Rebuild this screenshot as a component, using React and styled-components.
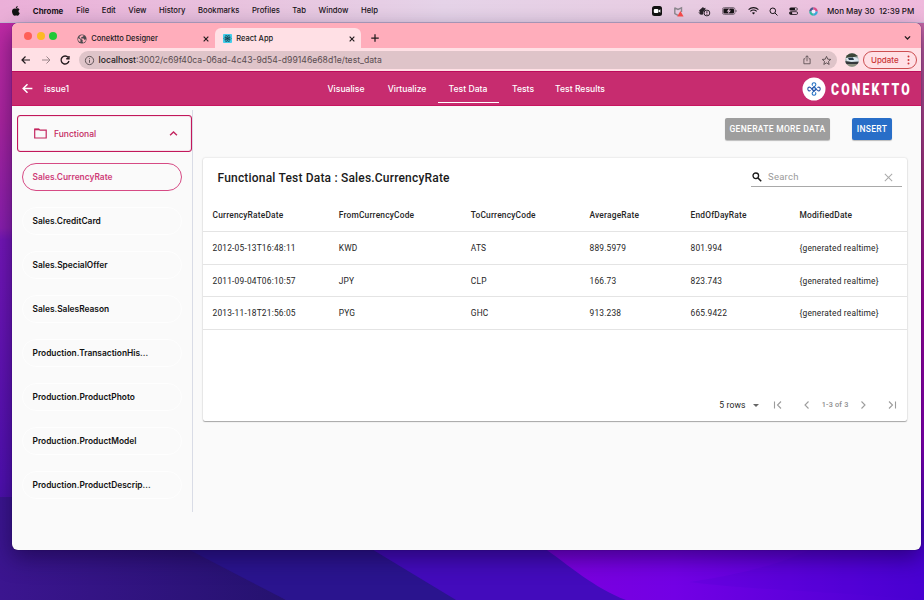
import React from "react";
import { useState } from "react";
import styled, { createGlobalStyle } from "styled-components";

const menus = ["File", "Edit", "View", "History", "Bookmarks", "Profiles", "Tab", "Window", "Help"];

const links = [
	{ name: "Visualise", width: 61 },
	{ name: "Virtualize", width: 61 },
	{ name: "Test Data", width: 61 },
	{ name: "Tests", width: 49 },
	{ name: "Test Results", width: 65 },
];

const tables = [
	"Sales.CurrencyRate",
	"Sales.CreditCard",
	"Sales.SpecialOffer",
	"Sales.SalesReason",
	"Production.TransactionHis...",
	"Production.ProductPhoto",
	"Production.ProductModel",
	"Production.ProductDescrip...",
];

const columns = ["CurrencyRateDate", "FromCurrencyCode", "ToCurrencyCode", "AverageRate", "EndOfDayRate", "ModifiedDate"];

const rows = [
	["2012-05-13T16:48:11", "KWD", "ATS", "889.5979", "801.994", "{generated realtime}"],
	["2011-09-04T06:10:57", "JPY", "CLP", "166.73", "823.743", "{generated realtime}"],
	["2013-11-18T21:56:05", "PYG", "GHC", "913.238", "665.9422", "{generated realtime}"],
];

// simple stroked icon, every path is drawn in a 24 unit box
const Icon = ({ size = 12, width = 2, children }) => (
	<svg width={size} height={size} viewBox="0 0 24 24" fill="none" stroke="currentColor" strokeWidth={width}>
		{children}
	</svg>
);

const Wallpaper = () => (
	<Backdrop viewBox="0 0 924 600" preserveAspectRatio="none">
		<defs>
			<linearGradient id="base" x1="0" y1="0" x2="0" y2="1">
				<stop offset="0" stopColor="#c42ba6" />
				<stop offset=".2" stopColor="#ac259f" />
				<stop offset=".38" stopColor="#8a1fae" />
				<stop offset=".4" stopColor="#7416b7" />
				<stop offset=".8" stopColor="#5010b0" />
				<stop offset="1" stopColor="#35138b" />
			</linearGradient>
			<linearGradient id="right" x1="0" y1="0" x2="0" y2="1">
				<stop offset="0" stopColor="#c46ba8" />
				<stop offset=".3" stopColor="#a8337c" />
				<stop offset=".5" stopColor="#a0069a" />
				<stop offset=".74" stopColor="#8a00ba" />
				<stop offset=".88" stopColor="#4705c4" />
				<stop offset="1" stopColor="#4a00d0" />
			</linearGradient>
			<linearGradient id="floor" x1="0" y1="0" x2="1" y2="0">
				<stop offset="0" stopColor="#3b158f" />
				<stop offset="1" stopColor="#25126f" />
			</linearGradient>
			<linearGradient id="violet" x1="0" y1="0" x2="1" y2="0">
				<stop offset="0" stopColor="#7c00dc" />
				<stop offset=".35" stopColor="#7300e5" />
				<stop offset="1" stopColor="#4800d2" />
			</linearGradient>
		</defs>
		<rect width="924" height="600" fill="url(#base)" />
		<rect x="460" width="464" height="600" fill="url(#right)" />
		<path d="M0 497H120L286 600H0Z" fill="url(#floor)" />
		<path d="M180 545L286 600H460L370 545Z" fill="#2a148e" />
		<path d="M365 545L456 600H626L540 545Z" fill="#430bbc" />
		<path d="M540 545C570 566 594 588 626 600H924V545Z" fill="url(#violet)" />
		<path d="M820 545C780 566 735 575 690 582C750 590 850 592 924 600V545Z" fill="#4c00d4" opacity=".2" />
	</Backdrop>
);

const StatusIcons = () => (
	<>
		<svg width="10" height="10" viewBox="0 0 10 10">
			<rect width="10" height="10" rx="2.5" fill="#111" />
			<rect x="1.8" y="3" width="4.6" height="4" rx="1" fill="#fff" />
			<path d="M6.7 4.5L8.4 3.3V6.7L6.7 5.5Z" fill="#fff" />
		</svg>
		<svg width="11" height="11" viewBox="0 0 11 11">
			<path d="M1.8 1.5V7.5L5 9.3M1.8 1.8L5 3.4L8.5 1.8V6" fill="none" stroke="#8a858c" strokeWidth="1.4" />
			<path d="M7.4 5L10.6 10.5H4.2Z" fill="#f24848" />
		</svg>
		<svg width="13" height="11" viewBox="0 0 13 11">
			<path d="M1 4.5L5 1L6 2.2L7.5 1.8L7.3 4L5.2 6V8.5L3 8.8L1 7.8L2.3 6.7L0 6.2L2 5.4Z" fill="#29232a" />
			<circle cx="8.9" cy="7" r="2.9" fill="#eac7e0" stroke="#29232a" />
			<path d="M8.9 5.2V7.4M8.9 8V8.8" stroke="#29232a" />
		</svg>
		<svg width="15" height="8" viewBox="0 0 15 8">
			<rect x=".4" y=".5" width="12.6" height="7" rx="2" fill="#eac7e0" stroke="#6a5c69" strokeWidth=".8" />
			<rect x="1.4" y="1.5" width="10.6" height="5" rx="1" fill="#161216" />
			<path d="M7.8 1L4.6 4.4H6.6L5.8 7L9 3.6H7.1Z" fill="#eac7e0" />
			<path d="M14 3V5" stroke="#6a5c69" />
		</svg>
		<svg width="11" height="8" viewBox="0 0 11 8" fill="none" stroke="#161216" strokeWidth="1.1">
			<path d="M.6 2.6C3.4 0 7.6 0 10.4 2.6M2.3 4.4C4.2 2.8 6.8 2.8 8.7 4.4" />
			<path d="M3.9 5.8C4.9 5 6.1 5 7.1 5.8L5.5 7.5Z" fill="#161216" stroke="none" />
		</svg>
		<svg width="9" height="9" viewBox="0 0 9 9" fill="none" stroke="#161216">
			<circle cx="3.8" cy="3.8" r="2.8" />
			<path d="M6 6L8.5 8.5" />
		</svg>
		<svg width="9" height="8" viewBox="0 0 9 8">
			<rect x=".4" y=".4" width="8.2" height="3" rx="1.5" fill="#161216" />
			<circle cx="6.9" cy="1.9" r="1" fill="#e7cbe1" />
			<rect x=".4" y="4.7" width="8.2" height="2.8" rx="1.4" fill="none" stroke="#161216" strokeWidth=".8" />
			<circle cx="2.1" cy="6.1" r="1.2" fill="#161216" />
		</svg>
		<svg width="9" height="9" viewBox="0 0 9 9" fill="none" strokeWidth="2.2">
			<circle cx="4.5" cy="4.5" r="2" fill="#f2ecff" />
			<path d="M1.3 4.5A3.2 3.2 0 0 1 4.5 1.3" stroke="#4a5c91" />
			<path d="M4.5 1.3A3.2 3.2 0 0 1 7.7 4.5" stroke="#db4c88" />
			<path d="M7.7 4.5A3.2 3.2 0 0 1 4.5 7.7" stroke="#37a9db" />
			<path d="M4.5 7.7A3.2 3.2 0 0 1 1.3 4.5" stroke="#29bda4" />
		</svg>
	</>
);

const ReactMark = () => (
	<svg width="9" height="9" viewBox="0 0 10 10" fill="none" stroke="#173a47" strokeWidth=".6">
		<rect width="10" height="10" rx="1" fill="#43cdea" stroke="none" />
		<ellipse cx="5" cy="5" rx="4" ry="1.6" />
		<ellipse cx="5" cy="5" rx="4" ry="1.6" transform="rotate(60 5 5)" />
		<ellipse cx="5" cy="5" rx="4" ry="1.6" transform="rotate(120 5 5)" />
		<circle cx="5" cy="5" r=".9" fill="#173a47" />
	</svg>
);

const Avatar = () => (
	<svg width="14" height="14" viewBox="0 0 14 14">
		<clipPath id="face"><circle cx="7" cy="7" r="6.8" /></clipPath>
		<g clipPath="url(#face)">
			<rect width="14" height="14" fill="#a5b3b2" />
			<path d="M0 0H14V3L9 4L0 5Z" fill="#3d4638" />
			<path d="M1 5L9 4L14 6V9L7 9L2 8Z" fill="#dce6ee" />
			<path d="M3 5L8 4.6L9 7L4 7Z" fill="#26394b" />
			<path d="M0 8L6 9L14 8.5V11L0 11Z" fill="#34373a" />
			<path d="M0 11H14V14H0Z" fill="#8e9081" />
		</g>
	</svg>
);

const Logo = () => (
	<svg width="24" height="24" viewBox="0 0 24 24">
		<circle cx="12" cy="12" r="11.5" fill="#fff" />
		<g fill="none" stroke="#2474c6" strokeWidth="1.1">
			<path d="M12 14.2L9.8 12L13.4 8.6C14.4 7.2 13.6 5.8 12 5.8S9.6 7.2 10.6 8.6" />
			<path d="M9.8 12L12 9.8L15.4 13.4C16.8 14.4 18.2 13.6 18.2 12S16.8 9.6 15.4 10.6" stroke="#2956a7" />
			<path d="M12 9.8L14.2 12L10.6 15.4C9.6 16.8 10.4 18.2 12 18.2S14.4 16.8 13.4 15.4" />
			<path d="M14.2 12L12 14.2L8.6 10.6C7.2 9.6 5.8 10.4 5.8 12S7.2 14.4 8.6 13.4" stroke="#2956a7" />
		</g>
	</svg>
);

const App = () => {
	const [active, setActive] = useState("Sales.CurrencyRate");

	return (
		<Desktop>
			<GlobalStyle />
			<Wallpaper />
			<MenuBar>
				<svg width="8" height="10" viewBox="0 0 8 10" fill="#111">
					<path d="M4 2.8C5.3 2 6.8 2.3 7.5 3.4C6 4.4 6.2 6.4 7.8 7.1C7.2 8.8 6.3 9.8 5.5 9.7C4.7 9.4 3.9 9.3 3 9.7C1.7 10 0 7.6 0 5.4C0 3 2 1.8 4 2.8Z" />
					<path d="M3.8 2.2C3.8 1 4.6.1 5.7 0C5.8 1.2 4.9 2.2 3.8 2.2Z" />
				</svg>
				<MenuName>Chrome</MenuName>
				{menus.map((item) => (<MenuItem key={item}>{item}</MenuItem>))}
				<Status>
					<StatusIcons />
				</Status>
				<Clock>Mon May 30&nbsp; 12:39 PM</Clock>
			</MenuBar>

			<Window>
				<TabStrip>
					<Lights>
						<Light $color="#ff5f57" />
						<Light $color="#fdb924" />
						<Light $color="#20c838" />
					</Lights>
					<Tab>
						<svg width="10" height="10" viewBox="0 0 10 10">
							<circle cx="5" cy="5" r="4.6" fill="#4d4a4e" />
							<path d="M1 4.2C2 4.4 3 5 3.5 5.7L3.3 8.2C1.8 7.4.8 6 1 4.2ZM4 1.2L6.5 1.2L6.2 2.6L4.3 3.3L4 4.5H6.6L7.6 6L9 5.3C9 7 7.8 8.4 6.2 8.8L5.5 7.4L5.7 6L3.3 4.5L2.2 3Z" fill="#ffadbb" />
						</svg>
						<TabName>Conektto Designer</TabName>
						<Icon size={8} width={3.4}><path d="M5 5L19 19M19 5L5 19" /></Icon>
					</Tab>
					<Tab $active>
						<ReactMark />
						<TabName>React App</TabName>
						<Icon size={8} width={3.4}><path d="M5 5L19 19M19 5L5 19" /></Icon>
					</Tab>
					<NewTab>
						<Icon size={10} width={3}><path d="M12 3V21M3 12H21" /></Icon>
					</NewTab>
					<ChevronBox>
						<Icon size={9} width={3.4}><path d="M5 9L12 16L19 9" /></Icon>
					</ChevronBox>
				</TabStrip>

				<Toolbar>
					<Icon width={2.4}><path d="M20 12H4M11 5L4 12L11 19" /></Icon>
					<Faded><Icon width={2}><path d="M4 12H20M13 5L20 12L13 19" /></Icon></Faded>
					<Icon width={2.6}><path d="M18.5 7A8 8 0 1 0 20 14M20 4V9.5H14.5" /></Icon>
					<AddressBar>
						<Icon size={11} width={2}><circle cx="12" cy="12" r="9" /><path d="M12 11V17M12 7V9" /></Icon>
						<Address><b>localhost</b>:3002/c69f40ca-06ad-4c43-9d54-d99146e68d1e/test_data</Address>
						<Icon size={10} width={2}><path d="M8 9H4.5V21H19.5V9H16M12 15V2M8 5.5L12 2L16 5.5" /></Icon>
						<Icon size={11} width={2}><path d="M12 3L14.7 9.1L21.3 9.7L16.3 14.1L17.8 20.6L12 17.2L6.2 20.6L7.7 14.1L2.7 9.7L9.3 9.1Z" /></Icon>
					</AddressBar>
					<Avatar />
					<Update>
						Update
						<svg width="3" height="10" viewBox="0 0 3 10" fill="currentColor">
							<circle cx="1.5" cy="1.5" r="1" />
							<circle cx="1.5" cy="5" r="1" />
							<circle cx="1.5" cy="8.5" r="1" />
						</svg>
					</Update>
				</Toolbar>

				<AppBar>
					<Icon size={13} width={2.7}><path d="M21 12H4M12 4L4 12L12 20" /></Icon>
					<Project>issue1</Project>
					<Links>
						{links.map((item) => (
							<AppLink key={item.name} $width={item.width} $active={item.name === "Test Data"}>{item.name}</AppLink>
						))}
					</Links>
					<Logo />
					<Brand>CONEKTTO</Brand>
				</AppBar>

				<Content>
					<Sidebar>
						<Group>
							<svg width="13" height="11" viewBox="0 0 13 11" fill="none" stroke="currentColor" strokeWidth="1.2">
								<path d="M.7 1H4.8L6 2.2H12.2V10H.7Z" />
								<path d="M.7 1.5H5" strokeWidth="1.6" />
							</svg>
							<GroupName>Functional</GroupName>
							<Icon size={11} width={3}><path d="M4.5 16L12 8.5L19.5 16" /></Icon>
						</Group>
						<TableList>
							{tables.map((item) => (
								<TableItem key={item} $active={item === active} onClick={() => setActive(item)}>{item}</TableItem>
							))}
						</TableList>
					</Sidebar>

					<Main>
						<Actions>
							<Button $color="#9e9e9e" $width={105}>GENERATE MORE DATA</Button>
							<Button $color="#286ec8" $width={40}>INSERT</Button>
						</Actions>
						<Card>
							<CardHeader>
								<Title>Functional Test Data : Sales.CurrencyRate</Title>
								<Search>
									<svg width="10" height="10" viewBox="0 0 10 10" fill="none" stroke="#1c1c1c">
										<circle cx="3.8" cy="3.8" r="2.8" strokeWidth="1.3" />
										<path d="M6 6L9.2 9.2" strokeWidth="1.6" />
									</svg>
									<Placeholder>Search</Placeholder>
									<Icon size={11} width={2.2}><path d="M4 4L20 20M20 4L4 20" /></Icon>
								</Search>
							</CardHeader>
							<HeadRow>
								{columns.map((item) => (<span key={item}>{item}</span>))}
							</HeadRow>
							{rows.map((row) => (
								<Row key={row[0]}>
									{row.map((cell, index) => (<span key={index}>{cell}</span>))}
								</Row>
							))}
							<Pager>
								<PageSize>5 rows</PageSize>
								<Caret />
								<PageIcon $space={13.5}><Icon width={2.2}><path d="M5 5V19M18 5L11 12L18 19" /></Icon></PageIcon>
								<PageIcon $space={17}><Icon width={2.2}><path d="M15 5L8 12L15 19" /></Icon></PageIcon>
								<Range>1-3 of 3</Range>
								<PageIcon $space={8}><Icon width={2.2}><path d="M9 5L16 12L9 19" /></Icon></PageIcon>
								<PageIcon $space={17.5}><Icon width={2.2}><path d="M6 5L13 12L6 19M19 5V19" /></Icon></PageIcon>
							</Pager>
						</Card>
					</Main>
				</Content>
			</Window>
		</Desktop>
	);
};

export default App;

const GlobalStyle = createGlobalStyle`
	* {
		box-sizing: border-box;
	}
	body {
		margin: 0;
		overflow: hidden;
		font-family: Inter, "Liberation Sans", sans-serif;
	}
	svg {
		flex: none;
		display: block;
	}
`;

const Desktop = styled.div`
	position: relative;
	width: 924px;
	height: 600px;
	overflow: hidden;
`;

const Backdrop = styled.svg`
	position: absolute;
	inset: 0;
	width: 100%;
	height: 100%;
	z-index: -1;
`;

const MenuBar = styled.header`
	display: flex;
	align-items: center;
	height: 23px;
	padding: 0 10px 0 12px;
	font-size: 7.7px;
	line-height: 12px;
	color: #171217;
	white-space: nowrap;
	border-bottom: 1px solid #c9b8d5;
	background: linear-gradient(90deg, #ebafd8 0, #e8c4df 28%, #e5d3e8 48%, #e8cce2 75%, #efb9dc 100%);
`;

const MenuName = styled.b`
	width: 31px;
	margin: 0 12.5px 0 12.8px;
	font-size: 7.9px;
	font-weight: 700;
`;

const MenuItem = styled.span`
	margin-right: 12.55px;
	font-weight: 500;
`;

const Status = styled.div`
	display: flex;
	align-items: center;
	gap: 10.8px;
	margin-left: auto;
	svg:nth-child(3) {
		margin-left: 3px;
	}
`;

const Clock = styled.span`
	width: 87px;
	margin-left: 9px;
	font-size: 8px;
	font-weight: 500;
`;

const Window = styled.div`
	display: flex;
	flex-direction: column;
	width: 909px;
	height: 527px;
	margin-left: 12px;
	overflow: hidden;
	border-radius: 6px;
	background: #fafafa;
	box-shadow: 0 8px 22px rgba(15, 0, 50, 0.5), 0 0 1px rgba(30, 0, 60, 0.9);
`;

const TabStrip = styled.div`
	display: flex;
	align-items: center;
	height: 25px;
	padding: 0 9px 0 12.4px;
	color: #211b1d;
	background: #ffadbb;
`;

const Lights = styled.div`
	display: flex;
	gap: 4.3px;
	width: 43.3px;
	margin-top: 1px;
`;

const Light = styled.span`
	width: 8px;
	height: 8px;
	border-radius: 50%;
	background: ${(props) => props.$color};
`;

const Tab = styled.div`
	display: flex;
	align-items: center;
	align-self: flex-end;
	width: ${(props) => (props.$active ? "146px" : "147px")};
	height: 20px;
	padding: 1px ${(props) => (props.$active ? "5px 0 8px" : "5px 0 9px")};
	border-radius: 6px 6px 0 0;
	background: ${(props) => (props.$active ? "#ffe0e5" : "none")};
`;

const TabName = styled.span`
	flex: 1;
	margin-left: 4.5px;
	font-size: 7.5px;
	font-weight: 500;
	line-height: 12px;
`;

const NewTab = styled.div`
	flex: 1;
	margin: 4px 0 0 9px;
`;

const ChevronBox = styled.div`
	margin-top: 4px;
`;

const Toolbar = styled.div`
	display: flex;
	align-items: center;
	gap: 7.5px;
	height: 23px;
	padding: 1px 4px 0 8px;
	color: #231b1e;
	background: #ffe0e5;
`;

const Faded = styled.span`
	opacity: 0.45;
`;

const AddressBar = styled.div`
	display: flex;
	flex: 1;
	align-items: center;
	gap: 9px;
	height: 18px;
	padding: 0 5px 0 5px;
	border-radius: 9px;
	color: #574a4e;
	background: #dfc4c9;
`;

const Address = styled.span`
	flex: 1;
	margin-left: -5px;
	font-size: 8.65px;
	line-height: 13px;
	color: #5a4c50;
	b {
		font-weight: 500;
		color: #241c1f;
	}
`;

const Update = styled.div`
	display: flex;
	align-items: center;
	justify-content: space-between;
	width: 54px;
	height: 18px;
	margin-left: -3px;
	padding: 0 6px 0 7px;
	border: 1px solid #cc4e51;
	border-radius: 9px;
	font-size: 8px;
	font-weight: 500;
	color: #cb3536;
`;

const AppBar = styled.div`
	display: flex;
	align-items: center;
	height: 35px;
	padding: 0 10px 0 9px;
	color: #fff;
	background: #c72c6f;
	border-top: 1px solid #bc0b5b;
	border-bottom: 1px solid #c8145f;
`;

const Project = styled.span`
	width: 271.5px;
	margin-left: 10px;
	font-size: 8.7px;
	font-weight: 500;
`;

const Links = styled.nav`
	display: flex;
	flex: 1;
	align-self: stretch;
`;

const AppLink = styled.a`
	display: flex;
	align-items: center;
	justify-content: center;
	width: ${(props) => props.$width}px;
	height: 31px;
	padding-top: 4px;
	border-bottom: 1px solid ${(props) => (props.$active ? "#fff" : "transparent")};
	font-size: 8.6px;
	font-weight: 500;
	white-space: nowrap;
`;

const Brand = styled.b`
	width: 80.5px;
	margin-left: 4.5px;
	font-family: Roboto, "Liberation Sans", sans-serif;
	font-size: 17px;
	font-weight: 900;
	letter-spacing: 3px;
	transform: scaleX(0.72);
	transform-origin: left;
`;

const Content = styled.div`
	display: flex;
	flex: 1;
	padding-top: 4px;
`;

const Sidebar = styled.aside`
	width: 181px;
	height: 402px;
	padding: 5px 0 0 5px;
	border-right: 1px solid #d9dce6;
`;

const Group = styled.div`
	display: flex;
	align-items: center;
	width: 175px;
	height: 37px;
	padding: 0 12px 0 16px;
	border: 1px solid #c2185b;
	border-radius: 3px;
	box-shadow: inset 0 0 1px #c2185b;
	color: #c4265f;
`;

const GroupName = styled.span`
	flex: 1;
	margin-left: 7px;
	font-size: 8.5px;
	font-weight: 500;
`;

const TableList = styled.div`
	display: flex;
	flex-direction: column;
	gap: 16px;
	padding: 11px 0 0 5px;
`;

const TableItem = styled.div`
	width: 160px;
	height: 28px;
	padding-left: 9.5px;
	border: 1px solid ${(props) => (props.$active ? "#d64a84" : "#fefefe")};
	border-radius: 14px;
	font-size: 8.4px;
	font-weight: 600;
	line-height: 26.5px;
	white-space: nowrap;
	color: ${(props) => (props.$active ? "#cf3c78" : "#111")};
	cursor: pointer;
`;

const Main = styled.main`
	flex: 1;
	padding: 8px 14px 0 10px;
	font-family: Roboto, "Liberation Sans", sans-serif;
`;

const Actions = styled.div`
	display: flex;
	justify-content: flex-end;
	gap: 22px;
	padding-right: 15px;
`;

const Button = styled.button`
	width: ${(props) => props.$width}px;
	height: 22px;
	padding: 0;
	border: none;
	border-radius: 2px;
	font-family: inherit;
	font-size: 8.5px;
	font-weight: 500;
	letter-spacing: 0.3px;
	white-space: nowrap;
	color: #fff;
	background: ${(props) => props.$color};
	box-shadow: 0 1px 1px rgba(0, 0, 0, 0.25);
`;

const Card = styled.section`
	display: flex;
	flex-direction: column;
	height: 263px;
	margin-top: 18px;
	border-radius: 2px;
	background: #fff;
	box-shadow: 0 1px 1px rgba(0, 0, 0, 0.3), 0 0 2px rgba(0, 0, 0, 0.18);
`;

const CardHeader = styled.div`
	display: flex;
	align-items: center;
	justify-content: space-between;
	height: 39px;
	padding: 0 5px 0 14.5px;
`;

const Title = styled.h1`
	margin: 0;
	font-size: 12px;
	font-weight: 500;
	letter-spacing: 0.19px;
	color: #1a1a1a;
`;

const Search = styled.div`
	display: flex;
	align-items: center;
	width: 151px;
	height: 19px;
	padding: 0 8px 0 1px;
	border-bottom: 1px solid #a9a9a9;
	color: #aaa;
`;

const Placeholder = styled.span`
	flex: 1;
	margin-left: 6px;
	padding-bottom: 1px;
	font-size: 9.5px;
	letter-spacing: 0.25px;
	color: #9a9a9a;
`;

const Row = styled.div`
	display: grid;
	grid-template-columns: 126.3px 132px 118.7px 101px 109px 1fr;
	align-items: center;
	height: 32.5px;
	padding: 1px 0 0 9.5px;
	border-bottom: 1px solid #e4e4e4;
	font-size: 8.4px;
	letter-spacing: 0.19px;
	color: #262626;
	white-space: nowrap;
`;

const HeadRow = styled(Row)`
	height: 35px;
	font-weight: 500;
`;

const Pager = styled.div`
	display: flex;
	align-items: center;
	justify-content: flex-end;
	height: 32px;
	margin-top: auto;
	padding-right: 9px;
	color: #9c9c9c;
`;

const PageSize = styled.span`
	margin-right: 7px;
	font-size: 8.6px;
	letter-spacing: 0.15px;
	color: #262626;
`;

const Caret = styled.i`
	border: 3px solid transparent;
	border-top-color: #666;
	border-bottom-width: 0;
`;

const PageIcon = styled.span`
	margin-left: ${(props) => props.$space}px;
`;

const Range = styled.span`
	margin-left: 8.5px;
	padding-bottom: 1px;
	font-size: 7.3px;
	font-weight: 500;
	letter-spacing: 0.2px;
	color: #8c8c8c;
`;
